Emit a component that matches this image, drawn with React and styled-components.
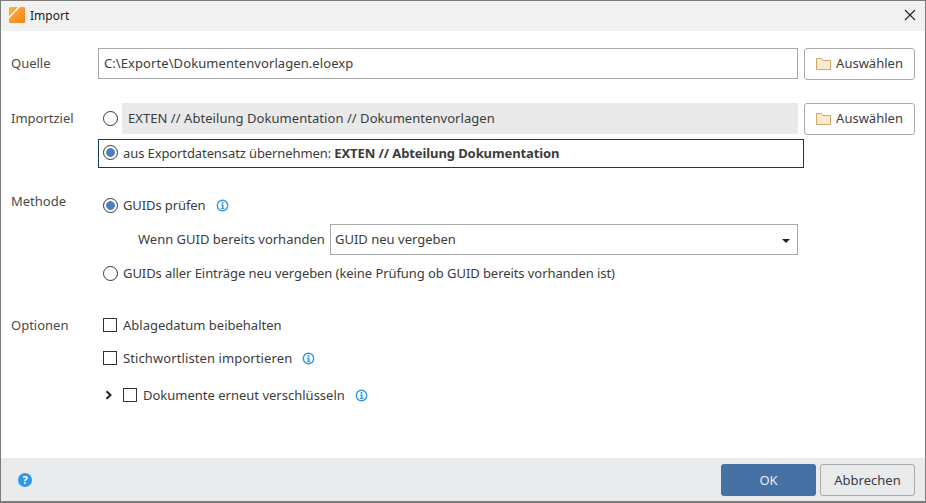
import React from "react";
import styled, { createGlobalStyle } from "styled-components";

const GlobalStyle = createGlobalStyle`
  html, body {
    margin: 0;
    padding: 0;
    background: #ffffff;
  }
  * {
    box-sizing: border-box;
  }
`;

const InfoIcon = () => (
  <StyledInfo viewBox="0 0 14 14">
    <circle cx="7" cy="7" r="5.6" fill="none" stroke="#2f96e8" strokeWidth="1.5" />
    <rect x="6" y="3.2" width="2" height="1.8" fill="#2f96e8" />
    <path d="M5.4 6h2.7v3.6h.9v1.1H5.3V9.6h1V7.1h-.9z" fill="#2f96e8" />
  </StyledInfo>
);

const FolderIcon = () => (
  <StyledFolder viewBox="0 0 15 12">
    <path
      d="M.5 11.5V.5h5l1.5 2h7.5v9z"
      fill="#fbeacf"
      stroke="#d0a56c"
      strokeWidth="1"
    />
  </StyledFolder>
);

const PickButton = () => (
  <StyledPickButton>
    <FolderIcon />
    <StyledPickText>Auswählen</StyledPickText>
  </StyledPickButton>
);

const App = () => {
  return (
    <>
      <GlobalStyle />
      <StyledWindow>
        <StyledTitleBar>
          <StyledLogo viewBox="0 0 16 16">
            <defs>
              <linearGradient id="logoFill" x1="0" y1="0" x2="1" y2="1">
                <stop offset="0" stopColor="#fdb33c" />
                <stop offset="1" stopColor="#f7801e" />
              </linearGradient>
            </defs>
            <rect width="16" height="16" rx="1" fill="url(#logoFill)" />
            <path d="M0 9.5 9 0h2L0 11.5z" fill="#ffffff" />
          </StyledLogo>
          <StyledWindowTitle>Import</StyledWindowTitle>
          <StyledClose viewBox="0 0 12 12">
            <path d="M1 1l10 10M11 1 1 11" stroke="#222" strokeWidth="1.1" fill="none" />
          </StyledClose>
        </StyledTitleBar>

        <StyledBody>
          <StyledSourceRow>
            <StyledRowLabel>Quelle</StyledRowLabel>
            <StyledInput>C:\Exporte\Dokumentenvorlagen.eloexp</StyledInput>
            <PickButton />
          </StyledSourceRow>

          <StyledTargetSection>
            <StyledTargetRow>
              <StyledRowLabel>Importziel</StyledRowLabel>
              <StyledRadioSlot>
                <StyledRadio />
              </StyledRadioSlot>
              <StyledReadonlyField>
                EXTEN // Abteilung Dokumentation // Dokumentenvorlagen
              </StyledReadonlyField>
              <PickButton />
            </StyledTargetRow>
            <StyledFocusRow>
              <StyledRadio $checked />
              <span>
                aus Exportdatensatz übernehmen:{" "}
                <strong>EXTEN // Abteilung Dokumentation</strong>
              </span>
            </StyledFocusRow>
          </StyledTargetSection>

          <StyledMethodSection>
            <StyledLabel>Methode</StyledLabel>
            <StyledMethodOptions>
              <StyledOption $tracking="-0.1px">
                <StyledRadio $checked />
                <span>GUIDs prüfen</span>
                <InfoIcon />
              </StyledOption>
              <StyledGuidRow>
                <StyledGuidLabel>Wenn GUID bereits vorhanden</StyledGuidLabel>
                <StyledSelect>
                  <StyledSelectText>GUID neu vergeben</StyledSelectText>
                  <StyledCaret />
                </StyledSelect>
              </StyledGuidRow>
              <StyledOption $tracking="-0.07px">
                <StyledRadio />
                <span>
                  GUIDs aller Einträge neu vergeben (keine Prüfung ob GUID bereits
                  vorhanden ist)
                </span>
              </StyledOption>
            </StyledMethodOptions>
          </StyledMethodSection>

          <StyledOptionsSection>
            <StyledLabel>Optionen</StyledLabel>
            <StyledOptionsList>
              <StyledOption>
                <StyledCheckbox />
                <span>Ablagedatum beibehalten</span>
              </StyledOption>
              <StyledOption $tracking="0.1px">
                <StyledCheckbox />
                <span>Stichwortlisten importieren</span>
                <InfoIcon />
              </StyledOption>
              <StyledExpandOption>
                <StyledChevron viewBox="0 0 8 10">
                  <path d="M1.5 1.2 5.5 5l-4 3.8" fill="none" stroke="#222" strokeWidth="2" />
                </StyledChevron>
                <StyledCheckbox />
                <span>Dokumente erneut verschlüsseln</span>
                <InfoIcon />
              </StyledExpandOption>
            </StyledOptionsList>
          </StyledOptionsSection>
        </StyledBody>

        <StyledFooter>
          <StyledHelp>?</StyledHelp>
          <StyledOkButton>OK</StyledOkButton>
          <StyledCancelButton>Abbrechen</StyledCancelButton>
        </StyledFooter>
      </StyledWindow>
    </>
  );
};

const StyledWindow = styled.div`
  width: 926px;
  height: 503px;
  display: flex;
  flex-direction: column;
  border: 1px solid #7b7b7b;
  border-bottom-width: 2px;
  background: #ffffff;
  font-family: "Noto Sans", sans-serif;
  font-size: 13px;
  color: #3c3c3c;
  overflow: hidden;
`;

const StyledTitleBar = styled.div`
  height: 30px;
  flex: none;
  display: flex;
  align-items: center;
  padding: 0 9px 2px 8px;
  background: #f1f1f1;
`;

const StyledLogo = styled.svg`
  width: 16px;
  height: 16px;
`;

const StyledWindowTitle = styled.span`
  margin-left: 5px;
  flex: 1;
  font-size: 12px;
  color: #222222;
`;

const StyledClose = styled.svg`
  width: 12px;
  height: 12px;
`;

const StyledBody = styled.div`
  flex: 1;
  padding: 17px 10px 0;
`;

const StyledLabel = styled.div`
  width: 87px;
  flex: none;
  padding-bottom: 2px;
  color: #4a4a4a;
`;

const StyledRowLabel = styled(StyledLabel)`
  height: 31px;
  display: flex;
  align-items: center;
`;

const StyledSourceRow = styled.div`
  display: flex;
  align-items: flex-start;
  height: 32px;
`;

const StyledInput = styled.div`
  width: 700px;
  height: 31px;
  flex: none;
  display: flex;
  align-items: center;
  padding: 0 0 2px 5px;
  border: 1px solid #a9a9a9;
  letter-spacing: 0.08px;
`;

const StyledPickButton = styled.div`
  width: 111px;
  height: 32px;
  flex: none;
  margin-left: 6px;
  display: flex;
  align-items: center;
  justify-content: center;
  gap: 5px;
  border: 1px solid #aaaaaa;
  border-radius: 3px;
`;

const StyledPickText = styled.span`
  margin-bottom: 2px;
`;

const StyledFolder = styled.svg`
  width: 15px;
  height: 12px;
`;

const StyledTargetSection = styled.div`
  margin-top: 23px;
`;

const StyledTargetRow = styled.div`
  display: flex;
  align-items: flex-start;
  height: 32px;
`;

const StyledRadioSlot = styled.div`
  width: 24px;
  height: 31px;
  flex: none;
  display: flex;
  align-items: center;
  padding-left: 5px;
`;

const StyledReadonlyField = styled.div`
  width: 676px;
  height: 31px;
  flex: none;
  display: flex;
  align-items: center;
  padding: 0 0 2px 6px;
  background: #e9e9e9;
  letter-spacing: 0.05px;
`;

const StyledFocusRow = styled.div`
  width: 706px;
  height: 29px;
  margin: 4px 0 0 87px;
  display: flex;
  align-items: center;
  gap: 5px;
  padding-left: 4px;
  border: 1px solid #0f3b66;
  letter-spacing: -0.1px;

  span {
    margin-bottom: 2px;
  }

  strong {
    font-weight: 700;
  }
`;

const StyledRadio = styled.span`
  width: 15px;
  height: 15px;
  flex: none;
  display: inline-block;
  border: 1px solid #333333;
  border-radius: 50%;
  background: ${(props) =>
    props.$checked
      ? "radial-gradient(circle, #4b7fc0 0 4px, #ffffff 4.7px)"
      : "#ffffff"};
`;

const StyledMethodSection = styled.div`
  display: flex;
  margin-top: 24px;
  line-height: 18px;
`;

const StyledMethodOptions = styled.div`
  flex: 1;
  padding: 4px 0 0 5px;
`;

const StyledOption = styled.div`
  display: flex;
  align-items: center;
  gap: 5px;
  height: 18px;
  letter-spacing: ${(props) => props.$tracking || "normal"};

  & + & {
    margin-top: 15px;
  }
`;

const StyledGuidRow = styled.div`
  display: flex;
  align-items: center;
  height: 31px;
  margin: 10px 0 9px 35px;
`;

const StyledGuidLabel = styled.span`
  width: 192px;
  flex: none;
  margin-bottom: 2px;
`;

const StyledSelect = styled.div`
  width: 468px;
  height: 31px;
  display: flex;
  align-items: center;
  justify-content: space-between;
  padding: 0 7px 0 4px;
  border: 1px solid #a9a9a9;
`;

const StyledSelectText = styled.span`
  margin-bottom: 2px;
`;

const StyledCaret = styled.span`
  width: 0;
  height: 0;
  margin-top: 3px;
  border-left: 4px solid transparent;
  border-right: 4px solid transparent;
  border-top: 4px solid #222222;
`;

const StyledOptionsSection = styled.div`
  display: flex;
  margin-top: 34px;
  line-height: 18px;
`;

const StyledOptionsList = styled.div`
  flex: 1;
  display: flex;
  flex-direction: column;
  padding-left: 5px;
`;

const StyledExpandOption = styled(StyledOption)`
  && {
    margin-top: 19px;
  }
`;

const StyledCheckbox = styled.span`
  width: 14px;
  height: 14px;
  flex: none;
  margin-right: 1px;
  border: 1px solid #333333;
  background: #ffffff;
`;

const StyledChevron = styled.svg`
  width: 8px;
  height: 10px;
  margin: 0 5px 0 2px;
`;

const StyledInfo = styled.svg`
  width: 13px;
  height: 13px;
  margin-left: 5px;
`;

const StyledFooter = styled.div`
  height: 43px;
  flex: none;
  display: flex;
  align-items: center;
  gap: 4px;
  padding: 0 10px 0 17px;
  background: #e9eaec;
`;

const StyledHelp = styled.div`
  width: 14px;
  height: 14px;
  margin-right: auto;
  display: flex;
  align-items: center;
  justify-content: center;
  border-radius: 50%;
  background: #2f96e8;
  color: #ffffff;
  font-size: 11px;
  font-weight: 700;
  line-height: 1;
`;

const StyledOkButton = styled.div`
  width: 95px;
  height: 32px;
  display: flex;
  align-items: center;
  justify-content: center;
  border-radius: 3px;
  background: #4671a5;
  color: #e8eef6;
`;

const StyledCancelButton = styled.div`
  width: 95px;
  height: 32px;
  display: flex;
  align-items: center;
  justify-content: center;
  border: 1px solid #aaaaaa;
  border-radius: 3px;
`;

export default App;
